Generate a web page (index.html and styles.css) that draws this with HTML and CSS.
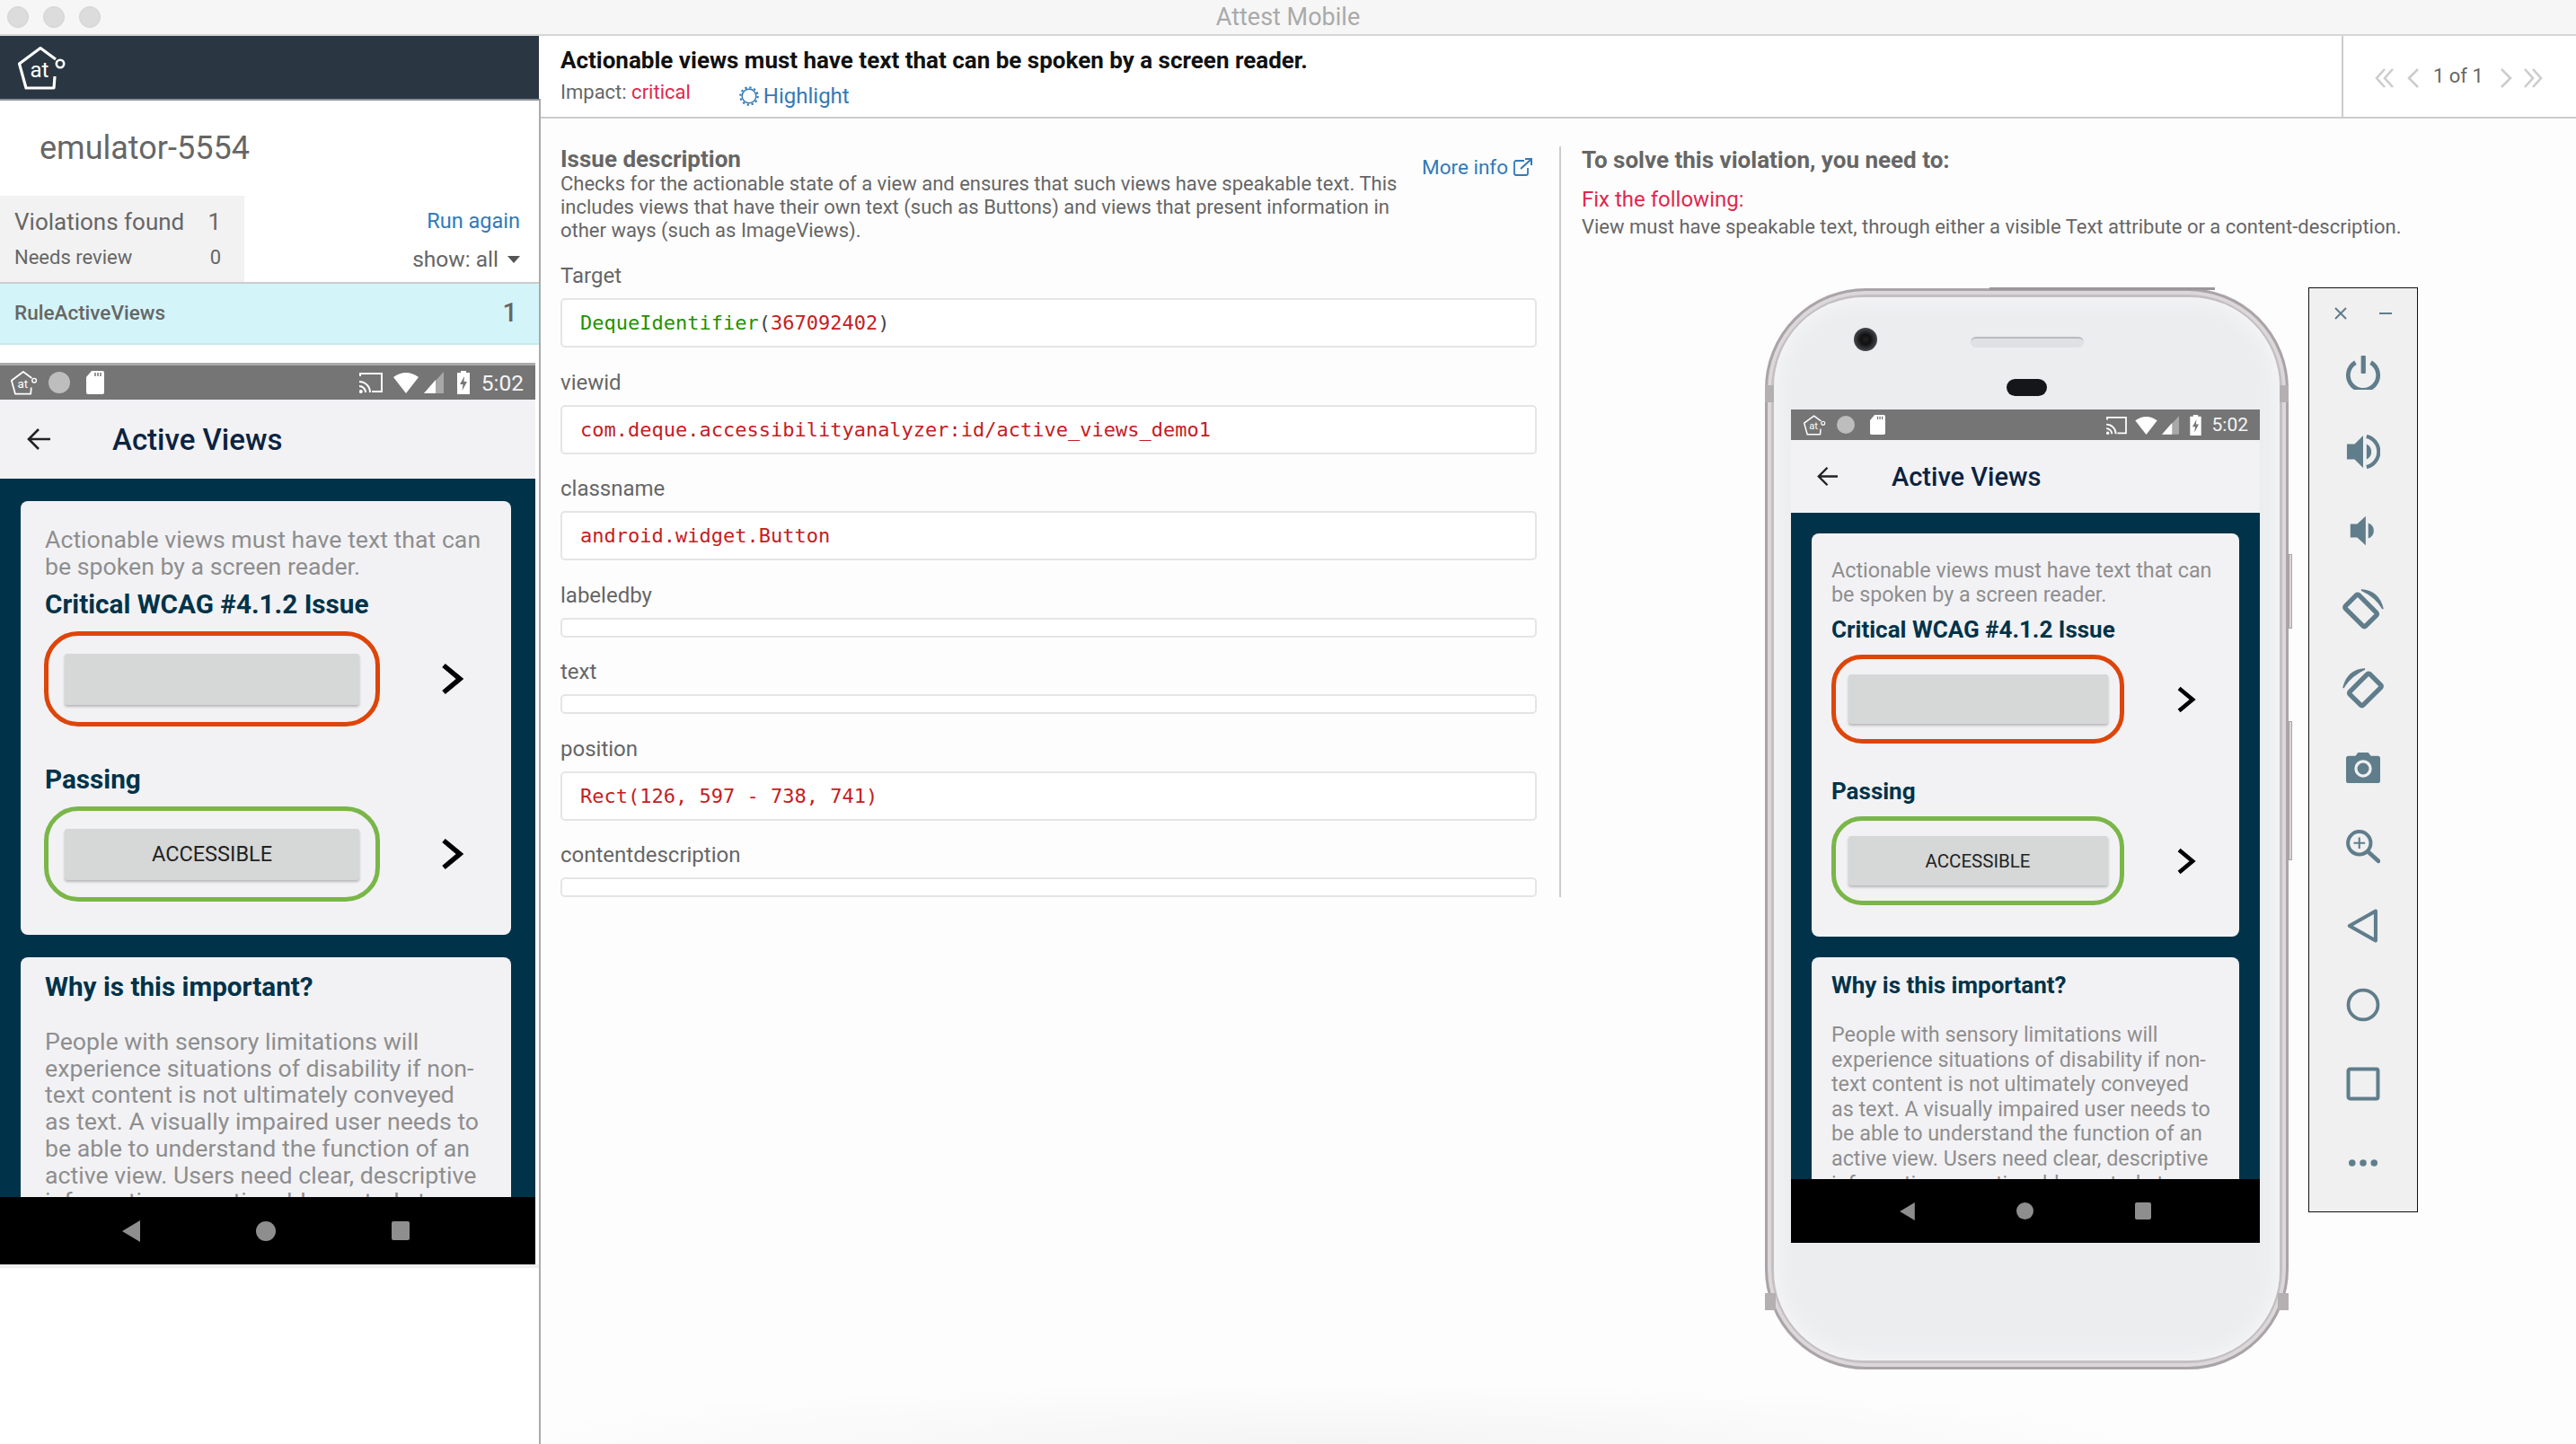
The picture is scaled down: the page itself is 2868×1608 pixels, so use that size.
FILE: index.html
```html
<!DOCTYPE html>
<html lang="en">
<head>
  <meta charset="UTF-8" />
  <meta name="viewport" content="width=device-width, initial-scale=1.0" />
  <title>Attest Mobile</title>
  <link rel="stylesheet" href="styles.css">
</head>
<body>
  <svg class="defs" aria-hidden="true">
    <symbol id="i-logo" viewBox="0 0 54 48">
      <path d="M41 33 L40 46 H9 L1.5 19 L25 1.5 L42 14" fill="none" stroke="currentColor" stroke-width="3.2" stroke-linejoin="round"/>
      <circle cx="47" cy="19" r="4.2" fill="none" stroke="currentColor" stroke-width="2.6"/>
      <text x="24" y="34" text-anchor="middle" font-family="Roboto" font-size="24" fill="currentColor">at</text>
    </symbol>
    <symbol id="i-sd" viewBox="0 0 20 26">
      <path d="M6 0 H18 a2 2 0 0 1 2 2 V24 a2 2 0 0 1 -2 2 H2 a2 2 0 0 1 -2 -2 V7 Z" fill="currentColor"/>
      <path d="M10 2 V6 M13 2 V6 M16 2 V6" stroke="#757575" stroke-width="1.5"/>
    </symbol>
    <symbol id="i-cast" viewBox="0 0 26 24">
      <path d="M1 5 V2 H25 V22 H14" fill="none" stroke="currentColor" stroke-width="2"/>
      <path d="M0 11 a12 12 0 0 1 12 12 M0 16 a7 7 0 0 1 7 7" fill="none" stroke="currentColor" stroke-width="2"/>
      <circle cx="1.8" cy="22" r="2" fill="currentColor"/>
    </symbol>
    <symbol id="i-wifi" viewBox="0 0 28 24">
      <path d="M0 6 Q14 -4 28 6 L14 24 Z" fill="currentColor"/>
    </symbol>
    <symbol id="i-signal" viewBox="0 0 22 24">
      <path d="M22 0 V24 H0 Z" fill="#a8a8a8"/>
      <path d="M13 9 V24 H0 Z" fill="currentColor"/>
    </symbol>
    <symbol id="i-battery" viewBox="0 0 14 26">
      <path d="M4 0 H10 V2 H14 V26 H0 V2 H4 Z" fill="currentColor"/>
      <path d="M8 6 L3 15 H6.5 L5.5 22 L11 12 H7.5 Z" fill="#757575"/>
    </symbol>
    <symbol id="i-chevron" viewBox="0 0 25 36">
      <path d="M3 3 L21 18 L3 33" fill="none" stroke="currentColor" stroke-width="5.5"/>
    </symbol>
    <symbol id="i-arrow" viewBox="0 0 26 26">
      <path d="M26 13 H2 M13 2 L2 13 L13 24" fill="none" stroke="currentColor" stroke-width="2.6"/>
    </symbol>
    <symbol id="i-navback" viewBox="0 0 20 24">
      <path d="M20 0 V24 L0 12 Z" fill="currentColor"/>
    </symbol>
    <symbol id="i-rotate" viewBox="0 0 48 48">
      <rect x="5" y="14" width="33" height="22" rx="2" transform="rotate(45 21.5 25)" fill="none" stroke="currentColor" stroke-width="5.5"/>
      <path d="M22 1 Q42 2 47 23 Q39 9 22 1 Z" fill="currentColor" stroke="currentColor" stroke-width="1.6"/>
    </symbol>
  </svg>

  <header class="titlebar">
    <div class="traffic">
      <span class="dot"></span>
      <span class="dot"></span>
      <span class="dot"></span>
    </div>
    <div class="app-title">Attest Mobile</div>
  </header>

  <div class="app">
    <aside class="sidebar">
      <div class="brand">
        <svg class="brand-logo"><use href="#i-logo"/></svg>
      </div>
      <div class="sidebar-body">
        <h1 class="device">emulator-5554</h1>
        <div class="summary">
          <div class="stats">
            <div class="stat stat-main"><span>Violations found</span><span>1</span></div>
            <div class="stat stat-sub"><span>Needs review</span><span>0</span></div>
          </div>
          <div class="actions">
            <a class="link run">Run again</a>
            <div class="show">show: all <span class="caret"></span></div>
          </div>
        </div>
        <div class="rule">
          <span class="rule-name">RuleActiveViews</span>
          <span class="rule-count">1</span>
        </div>

        <div class="screen">
          <div class="status">
            <svg class="st-logo"><use href="#i-logo"/></svg>
            <span class="st-spin"></span>
            <svg class="st-sd"><use href="#i-sd"/></svg>
            <span class="st-gap"></span>
            <svg class="st-cast"><use href="#i-cast"/></svg>
            <svg class="st-wifi"><use href="#i-wifi"/></svg>
            <svg class="st-signal"><use href="#i-signal"/></svg>
            <svg class="st-battery"><use href="#i-battery"/></svg>
            <span class="st-time">5:02</span>
          </div>
          <div class="appbar">
            <svg class="back"><use href="#i-arrow"/></svg>
            <span class="appbar-title">Active Views</span>
          </div>
          <div class="content">
            <section class="card card-demo">
              <p class="copy">Actionable views must have text that can be spoken by a screen reader.</p>
              <h2 class="demo-title first">Critical WCAG #4.1.2 Issue</h2>
              <div class="demo-row">
                <div class="outline outline-bad"><div class="btn"></div></div>
                <svg class="chev"><use href="#i-chevron"/></svg>
              </div>
              <h2 class="demo-title">Passing</h2>
              <div class="demo-row">
                <div class="outline outline-ok"><div class="btn">ACCESSIBLE</div></div>
                <svg class="chev"><use href="#i-chevron"/></svg>
              </div>
            </section>
            <section class="card card-why">
              <h2 class="why-title">Why is this important?</h2>
              <p class="copy why-copy">People with sensory limitations will experience situations of disability if non-text content is not ultimately conveyed as text. A visually impaired user needs to be able to understand the function of an active view. Users need clear, descriptive information on actionable controls to</p>
            </section>
          </div>
          <div class="navbar">
            <svg class="nav-back"><use href="#i-navback"/></svg>
            <span class="nav-home"></span>
            <span class="nav-recent"></span>
          </div>
        </div>
        <div class="screen-edge"></div>
      </div>
    </aside>

    <main class="main">
      <div class="issue-head">
        <div class="issue-info">
          <div class="issue-title">Actionable views must have text that can be spoken by a screen reader.</div>
          <div class="issue-meta">
            <span class="impact">Impact: <span class="critical">critical</span></span>
            <a class="link highlight">
              <svg class="hl-icon" viewBox="0 0 24 24"><circle cx="12" cy="12" r="8.5" fill="none" stroke="currentColor" stroke-width="1.6"/><circle cx="12" cy="12" r="10.5" fill="none" stroke="currentColor" stroke-width="2.4" stroke-dasharray="2.5 3"/></svg>
              Highlight
            </a>
          </div>
        </div>
        <div class="pager">
          <svg class="pg pg-double" viewBox="0 0 22 22"><path d="M11 1 L2 11 L11 21 M20 1 L11 11 L20 21" fill="none" stroke="currentColor" stroke-width="2.6"/></svg>
          <svg class="pg pg-single" viewBox="0 0 13 22"><path d="M12 1 L2 11 L12 21" fill="none" stroke="currentColor" stroke-width="2.6"/></svg>
          <span class="pg-text">1 of 1</span>
          <svg class="pg pg-single" viewBox="0 0 13 22"><path d="M1 1 L11 11 L1 21" fill="none" stroke="currentColor" stroke-width="2.6"/></svg>
          <svg class="pg pg-double" viewBox="0 0 22 22"><path d="M2 1 L11 11 L2 21 M11 1 L20 11 L11 21" fill="none" stroke="currentColor" stroke-width="2.6"/></svg>
        </div>
      </div>

      <div class="issue-body">
        <div class="details">
          <div class="desc-row">
            <div class="desc">
              <h3 class="desc-title">Issue description</h3>
              <p class="desc-text">Checks for the actionable state of a view and ensures that such views have speakable text. This includes views that have their own text (such as Buttons) and views that present information in other ways (such as ImageViews).</p>
            </div>
            <a class="link more">More info
              <svg class="ext" viewBox="0 0 22 20"><path d="M12 3 H3 a2 2 0 0 0 -2 2 V17 a2 2 0 0 0 2 2 H14 a2 2 0 0 0 2 -2 V11" fill="none" stroke="currentColor" stroke-width="1.8"/><path d="M8 12 L19 2 M13 1 H20 V8" fill="none" stroke="currentColor" stroke-width="2"/></svg>
            </a>
          </div>
          <div class="field">
            <label class="field-label">Target</label>
            <div class="field-box"><span class="c-green">DequeIdentifier</span><span class="c-dark">(</span><span class="c-red">367092402</span><span class="c-dark">)</span></div>
          </div>
          <div class="field">
            <label class="field-label">viewid</label>
            <div class="field-box"><span class="c-red">com.deque.accessibilityanalyzer:id/active_views_demo1</span></div>
          </div>
          <div class="field">
            <label class="field-label">classname</label>
            <div class="field-box"><span class="c-red">android.widget.Button</span></div>
          </div>
          <div class="field">
            <label class="field-label">labeledby</label>
            <div class="field-box is-empty"></div>
          </div>
          <div class="field">
            <label class="field-label">text</label>
            <div class="field-box is-empty"></div>
          </div>
          <div class="field">
            <label class="field-label">position</label>
            <div class="field-box"><span class="c-red">Rect(126, 597 - 738, 741)</span></div>
          </div>
          <div class="field">
            <label class="field-label">contentdescription</label>
            <div class="field-box is-empty"></div>
          </div>
        </div>

        <div class="solve">
          <h3 class="solve-title">To solve this violation, you need to:</h3>
          <div class="fix-title">Fix the following:</div>
          <div class="fix-text">View must have speakable text, through either a visible Text attribute or a content-description.</div>
        </div>
      </div>
    </main>
  </div>

  <!-- emulator windows sit on top of the report -->
  <div class="phone">
    <span class="notch notch-tl"></span>
    <span class="notch notch-tr"></span>
    <span class="notch notch-bl"></span>
    <span class="notch notch-br"></span>
    <span class="side-strip"></span>
    <span class="side-btn side-btn-a"></span>
    <span class="side-btn side-btn-b"></span>
    <div class="phone-face">
      <span class="camera"></span>
      <span class="speaker"></span>
      <span class="sensor"></span>
      <div class="screen screen-phone">
        <div class="status">
          <svg class="st-logo"><use href="#i-logo"/></svg>
          <span class="st-spin"></span>
          <svg class="st-sd"><use href="#i-sd"/></svg>
          <span class="st-gap"></span>
          <svg class="st-cast"><use href="#i-cast"/></svg>
          <svg class="st-wifi"><use href="#i-wifi"/></svg>
          <svg class="st-signal"><use href="#i-signal"/></svg>
          <svg class="st-battery"><use href="#i-battery"/></svg>
          <span class="st-time">5:02</span>
        </div>
        <div class="appbar">
          <svg class="back"><use href="#i-arrow"/></svg>
          <span class="appbar-title">Active Views</span>
        </div>
        <div class="content">
          <section class="card card-demo">
            <p class="copy">Actionable views must have text that can be spoken by a screen reader.</p>
            <h2 class="demo-title first">Critical WCAG #4.1.2 Issue</h2>
            <div class="demo-row">
              <div class="outline outline-bad"><div class="btn"></div></div>
              <svg class="chev"><use href="#i-chevron"/></svg>
            </div>
            <h2 class="demo-title">Passing</h2>
            <div class="demo-row">
              <div class="outline outline-ok"><div class="btn">ACCESSIBLE</div></div>
              <svg class="chev"><use href="#i-chevron"/></svg>
            </div>
          </section>
          <section class="card card-why">
            <h2 class="why-title">Why is this important?</h2>
            <p class="copy why-copy">People with sensory limitations will experience situations of disability if non-text content is not ultimately conveyed as text. A visually impaired user needs to be able to understand the function of an active view. Users need clear, descriptive information on actionable controls to</p>
          </section>
        </div>
        <div class="navbar">
          <svg class="nav-back"><use href="#i-navback"/></svg>
          <span class="nav-home"></span>
          <span class="nav-recent"></span>
        </div>
      </div>
    </div>
  </div>

  <div class="toolbar">
    <div class="tool-head">
      <svg class="tool-mini" viewBox="0 0 14 14"><path d="M1 1 L13 13 M13 1 L1 13" stroke="currentColor" stroke-width="2"/></svg>
      <svg class="tool-mini" viewBox="0 0 14 14"><path d="M0 7 H14" stroke="currentColor" stroke-width="2"/></svg>
    </div>
    <div class="tool"><svg class="tool-icon" viewBox="0 0 40 40"><path d="M11 8 A17.5 17.5 0 1 0 29 8" fill="none" stroke="currentColor" stroke-width="5"/><rect x="17.5" y="0" width="5.5" height="21" rx="1" fill="currentColor"/></svg></div>
    <div class="tool"><svg class="tool-icon" viewBox="0 0 40 40"><path d="M1 11 H10 L20 1 V39 L10 29 H1 Z" fill="currentColor"/><path d="M24 11 A10 10 0 0 1 24 29 Z" fill="currentColor"/><path d="M24 2 A18.5 18.5 0 0 1 24 38" fill="none" stroke="currentColor" stroke-width="4.4"/></svg></div>
    <div class="tool"><svg class="tool-icon" viewBox="0 0 40 40"><path d="M5 12 H13 L23 3 V37 L13 28 H5 Z" fill="currentColor"/><path d="M26 11 A9.5 9.5 0 0 1 26 29 Z" fill="currentColor"/></svg></div>
    <div class="tool"><svg class="tool-icon tool-icon-lg"><use href="#i-rotate"/></svg></div>
    <div class="tool"><svg class="tool-icon tool-icon-lg tool-flip"><use href="#i-rotate"/></svg></div>
    <div class="tool"><svg class="tool-icon" viewBox="0 0 40 36"><path d="M3 4 H11 L14 0 H26 L29 4 H37 a3 3 0 0 1 3 3 V33 a3 3 0 0 1 -3 3 H3 a3 3 0 0 1 -3 -3 V7 a3 3 0 0 1 3 -3 Z" fill="currentColor"/><circle cx="20" cy="19" r="8.5" fill="none" stroke="#f0f0f0" stroke-width="3.4"/></svg></div>
    <div class="tool"><svg class="tool-icon" viewBox="0 0 36 36"><circle cx="14" cy="14" r="12" fill="none" stroke="currentColor" stroke-width="3.8"/><path d="M23 23 L34 33" stroke="currentColor" stroke-width="4.4" stroke-linecap="round"/><path d="M14 8 V20 M8 14 H20" stroke="currentColor" stroke-width="2"/></svg></div>
    <div class="tool"><svg class="tool-icon" viewBox="0 0 28 30"><path d="M2 15 L25 2 V28 Z" fill="none" stroke="currentColor" stroke-width="3.2" stroke-linejoin="round"/></svg></div>
    <div class="tool"><svg class="tool-icon" viewBox="0 0 30 30"><circle cx="15" cy="15" r="13" fill="none" stroke="currentColor" stroke-width="3"/></svg></div>
    <div class="tool"><svg class="tool-icon" viewBox="0 0 30 30"><rect x="2" y="2" width="26" height="26" rx="1.5" fill="none" stroke="currentColor" stroke-width="3.2"/></svg></div>
    <div class="tool"><svg class="tool-icon tool-more" viewBox="0 0 34 8"><circle cx="4" cy="4" r="4" fill="currentColor"/><circle cx="17" cy="4" r="4" fill="currentColor"/><circle cx="30" cy="4" r="4" fill="currentColor"/></svg></div>
  </div>

  <div class="floor"></div>
</body>
</html>
```

FILE: styles.css
```css
* {
  box-sizing: border-box;
}
body {
  margin: 0;
  height: 100vh;
  overflow: hidden;
  display: flex;
  flex-direction: column;
  background: #fdfdfd;
  color: #666;
  font-family: Roboto, "Noto Sans", sans-serif;
  position: relative;
}
h1, h2, h3, p {
  margin: 0;
}
.defs {
  display: none;
}
.link {
  color: #337ab7;
}

/* window title */
.titlebar {
  height: 40px;
  flex: none;
  background: #f6f6f6;
  border-bottom: 2px solid #d6d6d6;
  display: grid;
  grid-template-columns: 1fr auto 1fr;
  align-items: center;
}
.traffic {
  display: flex;
  gap: 16px;
  padding-left: 8px;
}
.dot {
  width: 24px;
  height: 24px;
  border-radius: 50%;
  background: #dcdcdc;
  border: 1px solid #d2d2d2;
}
.app-title {
  font-size: 27px;
  color: #aaa;
  grid-column: 2;
}

.app {
  flex: 1;
  display: flex;
  min-height: 0;
}

/* left column */
.sidebar {
  width: 602px;
  flex: none;
  display: flex;
  flex-direction: column;
  background: #fff;
}
.brand {
  width: 600px;
  height: 70px;
  flex: none;
  background: #2a3742;
  color: #fff;
  padding: 12px 0 0 20px;
}
.brand-logo {
  width: 54px;
  height: 48px;
  display: block;
}
.sidebar-body {
  flex: 1;
  border-top: 2px solid #888f94;
  border-right: 2px solid #aaa;
}
.device {
  font-size: 36px;
  font-weight: 400;
  line-height: 44px;
  padding: 31px 0 31px 44px;
  height: 106px;
  color: #666;
}
.summary {
  height: 96px;
  display: flex;
  justify-content: space-between;
}
.stats {
  width: 272px;
  background: #f2f2f2;
  padding: 13px 26px 0 16px;
}
.stat {
  display: flex;
  justify-content: space-between;
}
.stat-main {
  font-size: 26px;
  line-height: 32px;
}
.stat-sub {
  font-size: 22px;
  line-height: 32px;
  margin-top: 8px;
}
.actions {
  padding: 13px 21px 0 0;
  text-align: right;
}
.run {
  font-size: 23.5px;
  line-height: 30px;
  display: block;
}
.show {
  font-size: 24.5px;
  line-height: 32px;
  margin-top: 12px;
}
.caret {
  display: inline-block;
  width: 0;
  height: 0;
  margin-left: 4px;
  vertical-align: 4px;
  border-left: 7px solid transparent;
  border-right: 7px solid transparent;
  border-top: 8px solid #555;
}
.rule {
  height: 70px;
  background: #d3f4f8;
  border-top: 2px solid #ccc;
  border-bottom: 2px solid #c5e9ee;
  display: flex;
  align-items: center;
  justify-content: space-between;
  padding: 0 24px 2px 16px;
  margin-bottom: 20px;
}
.rule-name {
  font-size: 22.5px;
  font-weight: 500;
}
.rule-count {
  font-size: 29px;
  font-weight: 500;
}

/* android screen, used in both the report and the emulator */
.screen {
  --status-h: 38px;
  --appbar-h: 88px;
  --nav-h: 75px;
  --pad-r: 27px;
  --card-l: 27px;
  --card-r: 31px;
  --copy-size: 26.7px;
  --copy-lh: 30px;
  box-sizing: content-box;
  width: 596px;
  height: 1001px;
  display: flex;
  flex-direction: column;
  border-top: 3px solid #aaa;
}
.screen-phone {
  --status-h: 34px;
  --appbar-h: 81px;
  --nav-h: 71px;
  --pad-r: 23px;
  --card-l: 22px;
  --card-r: 29px;
  --copy-size: 23.3px;
  --copy-lh: 27px;
  width: 522px;
  height: 928px;
  border-top: 0;
}
.screen-edge {
  height: 4px;
  width: 600px;
  background: #eee;
}
.status {
  height: var(--status-h);
  flex: none;
  background: #757575;
  color: #fff;
  display: flex;
  align-items: center;
  padding: 0 13px 0 12px;
}
.st-logo {
  width: 30px;
  height: 27px;
}
.st-spin {
  width: 24px;
  height: 24px;
  border-radius: 50%;
  background: #bdbdbd;
  margin-left: 12px;
}
.st-sd {
  width: 20px;
  height: 26px;
  margin-left: 18px;
}
.st-gap {
  flex: 1;
}
.st-cast {
  width: 26px;
  height: 24px;
}
.st-wifi {
  width: 28px;
  height: 24px;
  margin-left: 12px;
}
.st-signal {
  width: 22px;
  height: 24px;
  margin-left: 6px;
}
.st-battery {
  width: 14px;
  height: 26px;
  margin-left: 15px;
}
.st-time {
  font-size: 24.5px;
  margin-left: 13px;
  color: #f4f4f4;
}
.screen-phone .status {
  padding: 0 13px 0 14px;
}
.screen-phone .st-logo {
  width: 25px;
  height: 23px;
}
.screen-phone .st-spin {
  width: 20px;
  height: 20px;
  margin-left: 12px;
}
.screen-phone .st-sd {
  width: 17px;
  height: 22px;
  margin-left: 17px;
}
.screen-phone .st-cast {
  width: 23px;
  height: 21px;
}
.screen-phone .st-wifi {
  width: 25px;
  height: 21px;
  margin-left: 9px;
}
.screen-phone .st-signal {
  width: 19px;
  height: 21px;
  margin-left: 5px;
}
.screen-phone .st-battery {
  width: 13px;
  height: 23px;
  margin-left: 12px;
}
.screen-phone .st-time {
  font-size: 21px;
  margin-left: 12px;
}
.appbar {
  height: var(--appbar-h);
  flex: none;
  background: #f2f2f5;
  display: flex;
  align-items: center;
  padding-left: 30px;
  color: #222;
}
.back {
  width: 26px;
  height: 26px;
}
.appbar-title {
  font-size: 33px;
  font-weight: 500;
  color: #0c2340;
  margin-left: 69px;
}
.screen-phone .appbar {
  padding-left: 29px;
}
.screen-phone .back {
  width: 23px;
  height: 23px;
}
.screen-phone .appbar-title {
  font-size: 29px;
  margin-left: 60px;
}
.content {
  flex: 1;
  min-height: 0;
  overflow: hidden;
  background: #003349;
  padding: 25px var(--pad-r) 0 23px;
}
.card {
  background: #f2f2f5;
  border-radius: 8px;
  padding-left: var(--card-l);
  padding-right: var(--card-r);
}
.copy {
  font-size: var(--copy-size);
  line-height: var(--copy-lh);
  color: #8e8e8e;
}
.card-demo {
  height: 483px;
  padding-top: 28px;
}
.demo-title {
  font-size: 29.7px;
  font-weight: 700;
  line-height: 34px;
  color: #003349;
  margin-top: 42px;
}
.demo-title.first {
  margin-top: 10px;
}
.demo-row {
  display: flex;
  align-items: center;
  margin: 13px 0 0 -1px;
}
.outline {
  width: 374px;
  height: 106px;
  flex: none;
  border: 5px solid;
  border-radius: 38px;
  display: flex;
  align-items: center;
  justify-content: center;
}
.outline-bad {
  border-color: #de4509;
}
.outline-ok {
  border-color: #7ab648;
}
.btn {
  width: 328px;
  height: 57px;
  background: #d6d7d7;
  border-radius: 3px;
  box-shadow: 0 2px 3px rgba(0, 0, 0, 0.25);
  color: #222;
  font-size: 23.5px;
  display: flex;
  align-items: center;
  justify-content: center;
}
.chev {
  width: 25px;
  height: 36px;
  flex: none;
  margin-left: 68px;
  color: #000;
}
.card-why {
  margin-top: 25px;
  height: 400px;
  padding-top: 15px;
}
.why-title {
  font-size: 29.7px;
  font-weight: 700;
  line-height: 36px;
  color: #003349;
}
.why-copy {
  margin-top: 29px;
  line-height: 29.7px;
}

.screen-phone .content {
  padding-top: 23px;
}
.screen-phone .card-demo {
  height: 449px;
  padding-top: 28px;
}
.screen-phone .demo-title {
  font-size: 26px;
  line-height: 30px;
  margin-top: 38px;
}
.screen-phone .demo-title.first {
  margin-top: 10px;
}
.screen-phone .demo-row {
  margin-top: 13px;
  margin-left: 0;
}
.screen-phone .outline {
  width: 326px;
  height: 99px;
  border-radius: 34px;
}
.screen-phone .btn {
  width: 289px;
  height: 55px;
  font-size: 20.5px;
}
.screen-phone .chev {
  width: 22px;
  height: 30px;
  margin-left: 58px;
}
.screen-phone .card-why {
  margin-top: 23px;
  padding-top: 15px;
}
.screen-phone .why-title {
  font-size: 26px;
  line-height: 32px;
}
.screen-phone .why-copy {
  margin-top: 26px;
  line-height: 27.6px;
}
.navbar {
  height: var(--nav-h);
  flex: none;
  background: #000;
  display: flex;
  justify-content: center;
  align-items: center;
  gap: 129px;
  color: #8e8e8e;
  padding-right: 4px;
}
.nav-back {
  width: 20px;
  height: 24px;
}
.nav-home {
  width: 22px;
  height: 22px;
  border-radius: 50%;
  background: #8e8e8e;
}
.nav-recent {
  width: 20px;
  height: 21px;
  border-radius: 2px;
  background: #8e8e8e;
}
.screen-phone .navbar {
  gap: 113px;
  padding-right: 0;
}
.screen-phone .nav-back {
  width: 17px;
  height: 20px;
}
.screen-phone .nav-home {
  width: 19px;
  height: 19px;
}
.screen-phone .nav-recent {
  width: 18px;
  height: 19px;
}

/* right column */
.main {
  flex: 1;
  min-width: 0;
  display: flex;
  flex-direction: column;
}
.issue-head {
  height: 92px;
  flex: none;
  display: flex;
  background: #fff;
  border-bottom: 2px solid #ccc;
}
.issue-info {
  flex: 1;
  padding: 12px 0 0 22px;
}
.issue-title {
  font-size: 26px;
  font-weight: 700;
  line-height: 30px;
  color: #111;
}
.issue-meta {
  display: flex;
  align-items: flex-start;
  margin-top: 6px;
}
.impact {
  font-size: 22px;
  line-height: 30px;
  color: #666;
}
.critical {
  color: #e0284f;
}
.highlight {
  font-size: 24px;
  line-height: 30px;
  margin: 4px 0 0 54px;
  display: flex;
  align-items: center;
  gap: 5px;
}
.hl-icon {
  width: 22px;
  height: 22px;
}
.pager {
  width: 261px;
  flex: none;
  border-left: 2px solid #ccc;
  display: flex;
  align-items: center;
  padding: 4px 0 0 35px;
  color: #ccc;
}
.pg {
  height: 22px;
  display: block;
}
.pg-double {
  width: 22px;
}
.pg-single {
  width: 13px;
  margin: 0 12px 0 14px;
}
.pg-text {
  font-size: 22px;
  color: #666;
  margin: 0 5px 6px 4px;
}

.issue-body {
  flex: 1;
  min-height: 0;
  display: flex;
  align-items: flex-start;
  padding: 31px 0 0 22px;
}
.details {
  width: 1114px;
  flex: none;
  padding-right: 25px;
  border-right: 2px solid #ccc;
}
.desc-row {
  display: flex;
  justify-content: space-between;
  margin-bottom: 22px;
}
.desc {
  width: 940px;
}
.desc-title {
  font-size: 26px;
  font-weight: 700;
  line-height: 29px;
  color: #666;
}
.desc-text {
  font-size: 22px;
  line-height: 26px;
  color: #666;
}
.more {
  font-size: 22.5px;
  line-height: 30px;
  margin: 8px 4px 0 0;
  display: flex;
  align-items: center;
  gap: 6px;
  height: 30px;
}
.ext {
  width: 22px;
  height: 20px;
}
.field {
  margin-bottom: 23.5px;
}
.field:last-child {
  margin-bottom: 0;
}
.field-label {
  display: block;
  font-size: 24px;
  line-height: 30px;
  margin-bottom: 10px;
  color: #666;
}
.field-box {
  height: 55px;
  border: 2px solid #e5e5e5;
  border-radius: 5px;
  background: #fff;
  padding: 0 20px;
  display: flex;
  align-items: center;
  font-family: "DejaVu Sans Mono", "Liberation Mono", monospace;
  font-size: 22px;
  white-space: pre;
}
.field-box.is-empty {
  height: 22px;
}
.c-green {
  color: #1f9100;
}
.c-red {
  color: #c4201f;
}
.c-dark {
  color: #444;
}
.solve {
  padding-left: 23px;
}
.solve-title {
  font-size: 26px;
  font-weight: 700;
  line-height: 30px;
  color: #666;
}
.fix-title {
  font-size: 24px;
  line-height: 30px;
  color: #e0284f;
  margin-top: 14px;
}
.fix-text {
  font-size: 22px;
  line-height: 30px;
  color: #666;
  margin-top: 1px;
  white-space: nowrap;
}

/* emulator device */
.phone {
  position: absolute;
  left: 1965px;
  top: 321px;
  width: 583px;
  height: 1204px;
  border-radius: 112px;
  background: #c4bfc2;
  border: 3px solid #aaa4a8;
  box-shadow: inset 0 0 0 4px #dcd8da;
  padding: 7px;
}
.phone-face {
  position: relative;
  height: 100%;
  border-radius: 100px;
  background: #ecedef;
  box-shadow: inset 0 0 24px #f8f8f9;
  padding: 125px 0 0 19px;
}
.camera {
  position: absolute;
  left: 89px;
  top: 34px;
  width: 26px;
  height: 26px;
  border-radius: 50%;
  background: radial-gradient(circle, #222 0, #111 30%, #44464a 70%, #555 100%);
}
.speaker {
  position: absolute;
  left: 219px;
  top: 44px;
  width: 126px;
  height: 12px;
  border-radius: 6px;
  background: #dfe1e4;
  border-top: 2px solid #b8bbbf;
}
.sensor {
  position: absolute;
  left: 259px;
  top: 91px;
  width: 45px;
  height: 19px;
  border-radius: 10px;
  background: #15161a;
}
.notch {
  position: absolute;
  width: 12px;
  height: 19px;
  background: #b4b0b2;
}
.notch-tl {
  left: -3px;
  top: 105px;
}
.notch-tr {
  right: -3px;
  top: 105px;
}
.notch-bl {
  left: -3px;
  top: 1116px;
}
.notch-br {
  right: -3px;
  top: 1116px;
}
.side-strip {
  position: absolute;
  left: 247px;
  top: -4px;
  width: 251px;
  height: 3px;
  background: #9b979a;
}
.side-btn {
  position: absolute;
  right: -7px;
  width: 4px;
  background: #d8d6d7;
  border: 1px solid #a9a5a8;
}
.side-btn-a {
  top: 293px;
  height: 83px;
}
.side-btn-b {
  top: 479px;
  height: 155px;
}

/* emulator toolbar */
.toolbar {
  position: absolute;
  left: 2570px;
  top: 320px;
  width: 122px;
  height: 1030px;
  background: #f0f0f0;
  border: 1px solid #111;
  color: #607d8b;
}
.tool-head {
  height: 50px;
  padding-top: 5px;
  display: flex;
  align-items: center;
  justify-content: center;
  gap: 36px;
}
.tool-mini {
  width: 14px;
  height: 14px;
}
.tool {
  height: 88px;
  display: flex;
  align-items: center;
  justify-content: center;
}
.tool-icon {
  width: 38px;
  height: 38px;
}
.tool-icon-lg {
  width: 46px;
  height: 46px;
}
.tool-flip {
  transform: scaleX(-1);
}
.tool-more {
  width: 32px;
  height: 8px;
}

/* faint shadow on the desk behind the windows */
.floor {
  position: absolute;
  left: 500px;
  right: 400px;
  bottom: 0;
  height: 70px;
  pointer-events: none;
  background: radial-gradient(ellipse at bottom, rgba(0, 0, 0, 0.035) 0%, rgba(0, 0, 0, 0) 70%);
}
```
